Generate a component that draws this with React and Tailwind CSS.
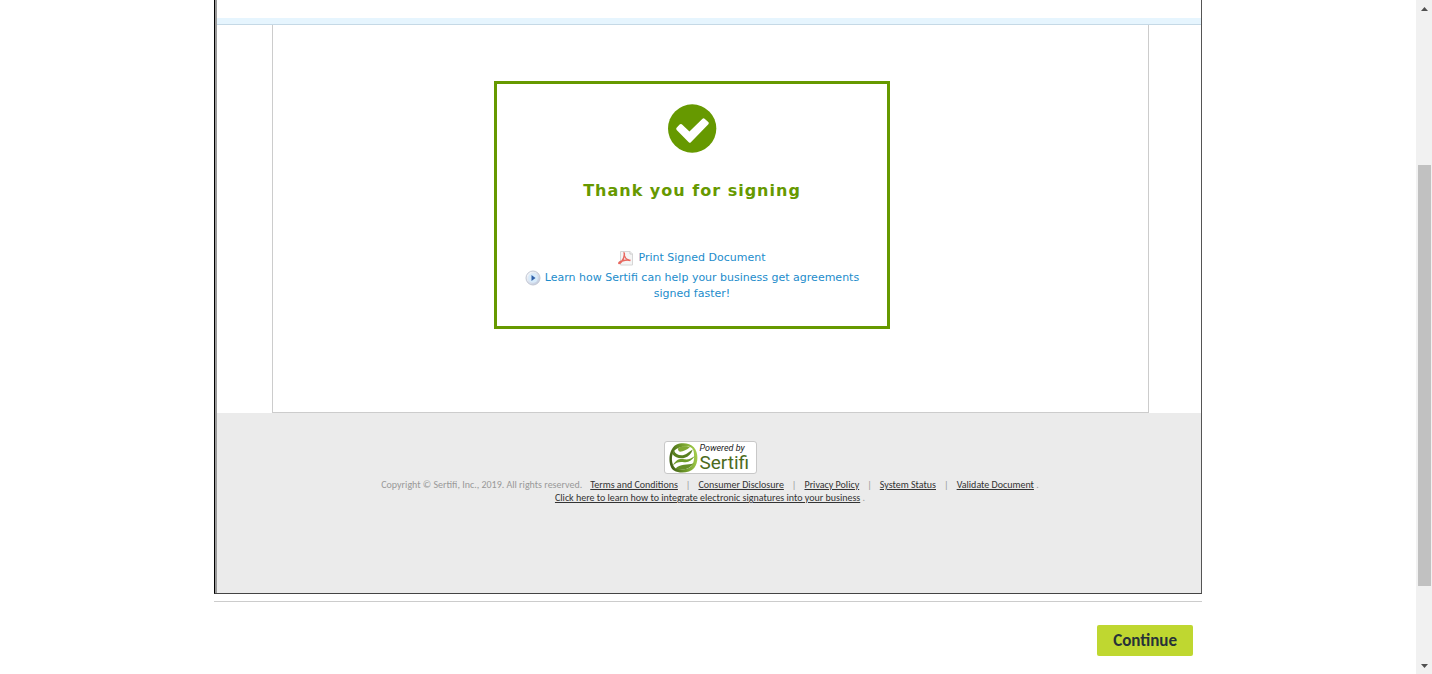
const footerLinks = [
  "Terms and Conditions",
  "Consumer Disclosure",
  "Privacy Policy",
  "System Status",
  "Validate Document",
];

function CheckIcon() {
  return (
    <svg className="mx-auto h-[49px] w-[49px]" viewBox="0 0 146 146" aria-hidden="true">
      <circle cx="72" cy="73" r="72" fill="#690" />
      <path
        d="M29 74L38 64 64 88 106 47 117 57 65 111z"
        fill="#fff"
        stroke="#fff"
        strokeWidth="9"
        strokeLinejoin="round"
      />
    </svg>
  );
}

function PdfIcon() {
  return (
    <svg className="mr-1 inline-block h-4 w-4 align-middle" viewBox="0 0 16 16" fill="none" aria-hidden="true">
      <path d="M2.500 1.500h9.500l2.500 2.500v11h-12z" fill="#f5f5f5" stroke="#d6d6d6" />
      <path d="M12 1.500v2.500h2.500" fill="#fff" stroke="#c9c9c9" />
      <path
        d="M5.500 2.500c.9 0 .9 1.600.8 2.800-.2 2-1.300 4.600-2.800 6.500C2.500 13 1.500 13.800 1 13.400c-.6-.6 1-1.800 3-2.400 2.700-.8 6.500-1.400 8.500-.5"
        stroke="#e8685f"
        strokeWidth="1.500"
      />
      <path d="M6.300 5.300c.5 2 2.200 4 4.600 5" stroke="#e8685f" strokeWidth="1.200" />
    </svg>
  );
}

function PlayIcon() {
  return (
    <svg className="mr-1 inline-block h-4 w-4 align-middle" viewBox="0 0 16 16" aria-hidden="true">
      <defs>
        <linearGradient id="play" x1="0" y1="0" x2="1" y2="1">
          <stop offset="0" stopColor="#ffffff" />
          <stop offset="1" stopColor="#b9c5dc" />
        </linearGradient>
      </defs>
      <circle cx="8" cy="8" r="7" fill="url(#play)" stroke="#c3c8d4" />
      <circle cx="8" cy="8" r="4.800" fill="#d8ebfa" />
      <path d="M6.500 5l4 3-4 3z" fill="#2f5fa8" />
    </svg>
  );
}

function SertifiMark() {
  return (
    <svg className="h-[30px] w-[30px]" viewBox="0 0 82 83" aria-hidden="true">
      <defs>
        <linearGradient id="mark" x1="0" y1="0.600" x2="1" y2="0.400">
          <stop offset="0" stopColor="#3f5d14" />
          <stop offset="0.450" stopColor="#6a9428" />
          <stop offset="1" stopColor="#a5cf4c" />
        </linearGradient>
      </defs>
      <path d="M22 5C38-2 60 0 71 12c13 14 13 42 1 57-12 14-40 17-56 7C-2 64-1 18 22 5z" fill="url(#mark)" />
      <path d="M18 20c8-8 24-12 38-10 9 2 15 8 15 17 2 14 1 27-7 37-10 9-30 12-44 6C8 58 7 34 18 20z" fill="#fff" />
      <path d="M16 20c3 9 11 14 21 14 11 0 19-8 31-16-5 13-12 20-22 23-13 4-27-1-34-10z" fill="#58801f" />
      <path d="M28 14c8-6 24-7 32-2-8 7-18 12-27 12-5-1-7-5-5-10z" fill="#7fa832" />
      <path d="M74 36c-8 12-18 19-30 17-12-2-22 0-31 9 8-16 18-20 32-17 10 2 20-3 29-9z" fill="#6f9c2b" />
      <path d="M70 56c-8 3-17 3-26 4-10 1-18 4-24 11 11 5 38 5 50-15z" fill="#668f28" />
    </svg>
  );
}

function PoweredBadge() {
  return (
    <a
      href="#sertifi"
      className="flex h-[33px] w-[93px] items-center rounded-[3px] border border-[#c8c8c8] bg-white pl-[3px]"
    >
      <SertifiMark />
      <span className="flex flex-col pl-0.5 font-[Roboto,sans-serif]">
        <span className="text-[9px] leading-[10px] text-[#222] italic">Powered by</span>
        <span className="text-[19px] leading-5 text-[#4c6b1c]">Sertifi</span>
      </span>
    </a>
  );
}

function ThankYouCard() {
  return (
    <section className="w-full max-w-[396px] border-[3px] border-[#690] px-5 pt-5 pb-6 text-center font-[Verdana,'DejaVu_Sans',sans-serif]">
      <CheckIcon />
      <h1 className="mt-6 text-[16px] leading-7 font-bold tracking-[1px] text-[#690]">Thank you for signing</h1>
      <div className="mt-[45px] text-[11px] leading-4 text-[#1c8ccb]">
        <p className="mb-1">
          <a href="#print">
            <PdfIcon />
            Print Signed Document
          </a>
        </p>
        <p>
          <a href="#learn">
            <PlayIcon />
            Learn how Sertifi can help your business get agreements signed faster!
          </a>
        </p>
      </div>
    </section>
  );
}

function Footer() {
  return (
    <footer className="flex flex-col items-center bg-[#ebebeb] pt-7 pb-[89px] pl-0.5 font-[Carlito,'Noto_Sans',sans-serif] text-[10px] leading-[13px] text-[#999]">
      <PoweredBadge />
      <div className="mt-1 text-center">
        <p>
          Copyright © Sertifi, Inc., 2019. All rights reserved.
          {footerLinks.map((label, i) => (
            <span key={label}>
              {i > 0 && <span className="ml-2">|</span>}
              <a href="#footer" className="ml-2 text-[#333] underline">
                {label}
              </a>
            </span>
          ))}{" "}
          .
        </p>
        <p>
          <a href="#integrate" className="text-[#333] underline">
            Click here to learn how to integrate electronic signatures into your business
          </a>{" "}
          .
        </p>
      </div>
    </footer>
  );
}

function Scrollbar() {
  return (
    <div className="sticky top-0 flex h-screen w-4 shrink-0 flex-col bg-[#f1f1f1] pr-px pl-0.5" aria-hidden="true">
      <div className="flex h-[17px] items-center justify-center">
        <svg className="h-1 w-[7px]" viewBox="0 0 7 4">
          <path d="M0 4L3.500 0 7 4z" fill="#505050" />
        </svg>
      </div>
      <div className="grow-[148] basis-0" />
      <div className="grow-[421] basis-0 bg-[#c1c1c1]" />
      <div className="grow-[71] basis-0" />
      <div className="flex h-[17px] items-center justify-center">
        <svg className="h-1 w-[7px]" viewBox="0 0 7 4">
          <path d="M0 0L3.500 4 7 0z" fill="#505050" />
        </svg>
      </div>
    </div>
  );
}

export default function App() {
  return (
    <div className="flex min-h-screen bg-white">
      <main className="min-w-0 flex-1">
        <div className="mx-auto w-full max-w-[988px]">
          <div className="border-r border-b border-l border-black border-r-[#555] border-b-[#444]">
            <div className="border-l-2 border-[#999]">
              <div className="h-[18px]" />
              <div className="h-[7px] border-b border-[#c5d9e6] bg-[#e6f5fe]" />
              <div className="px-[5%] sm:pr-[52px] sm:pl-[55px]">
                <div className="flex justify-center border-r border-b border-l border-[#ccc] px-4 pt-14 pb-[83px] sm:pr-[53px]">
                  <ThankYouCard />
                </div>
              </div>
              <Footer />
            </div>
          </div>
          <hr className="mt-[7px] border-[#ccc]" />
          <div className="flex justify-end pt-[23px] pr-[9px]">
            <button
              type="button"
              className="rounded-xs bg-[#bfd730] px-4 py-1 font-[Carlito,'Noto_Sans',sans-serif] text-[17px] leading-[23px] font-bold text-[#263238]"
            >
              Continue
            </button>
          </div>
        </div>
      </main>
      <Scrollbar />
    </div>
  );
}
